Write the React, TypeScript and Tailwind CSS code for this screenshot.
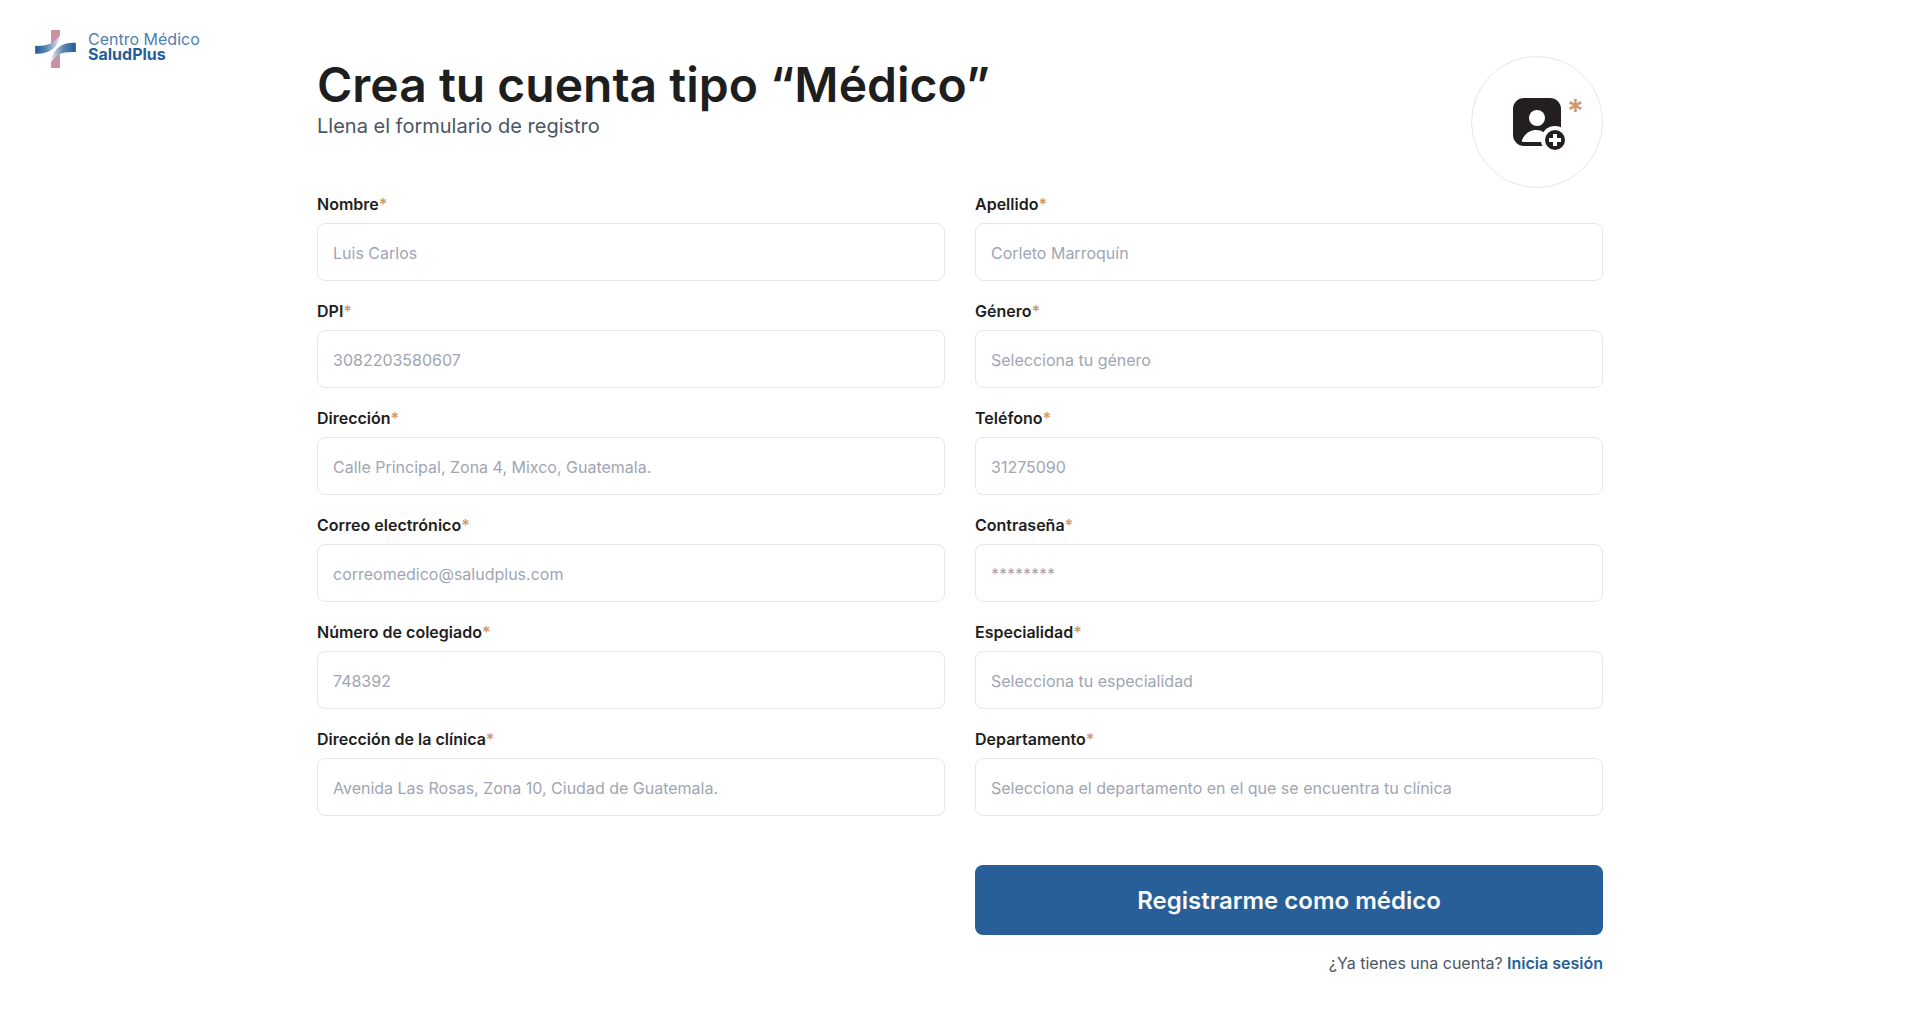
import { useId } from "react";

type FieldProps = {
  label: string;
  placeholder: string;
  type?: string;
  options?: string[];
};

const fields: FieldProps[] = [
  { label: "Nombre", placeholder: "Luis Carlos" },
  { label: "Apellido", placeholder: "Corleto Marroquín" },
  { label: "DPI", placeholder: "3082203580607" },
  { label: "Género", placeholder: "Selecciona tu género", options: ["Femenino", "Masculino"] },
  { label: "Dirección", placeholder: "Calle Principal, Zona 4, Mixco, Guatemala." },
  { label: "Teléfono", placeholder: "31275090", type: "tel" },
  { label: "Correo electrónico", placeholder: "correomedico@saludplus.com", type: "email" },
  { label: "Contraseña", placeholder: "********", type: "password" },
  { label: "Número de colegiado", placeholder: "748392" },
  {
    label: "Especialidad",
    placeholder: "Selecciona tu especialidad",
    options: ["Cardiología", "Dermatología", "Pediatría"],
  },
  { label: "Dirección de la clínica", placeholder: "Avenida Las Rosas, Zona 10, Ciudad de Guatemala." },
  {
    label: "Departamento",
    placeholder: "Selecciona el departamento en el que se encuentra tu clínica",
    options: ["Guatemala", "Quetzaltenango", "Sacatepéquez"],
  },
];

function Field({ label, placeholder, type = "text", options }: FieldProps) {
  const id = useId();
  return (
    <div className="flex flex-col gap-2">
      <label htmlFor={id} className="text-base leading-[21px] font-semibold">
        {label}
        <span className="text-[#cb9b6f]">*</span>
      </label>
      {options ? (
        <select
          id={id}
          defaultValue=""
          className="h-[58px] w-full appearance-none rounded-lg border border-gray-200 bg-white px-[15px] pt-[2px] text-base text-[#9fa5b4]"
        >
          <option value="" disabled>
            {placeholder}
          </option>
          {options.map((option) => (
            <option key={option}>{option}</option>
          ))}
        </select>
      ) : (
        <input
          id={id}
          type={type}
          placeholder={placeholder}
          className="h-[58px] w-full rounded-lg border border-gray-200 bg-white px-[15px] pt-[2px] text-base placeholder:text-[#9fa5b4]"
        />
      )}
    </div>
  );
}

function Logo() {
  return (
    <div className="flex items-start gap-3 pt-[30px] pl-[35px]">
      <svg width="41" height="38" viewBox="15 15 123 115" className="shrink-0" aria-hidden="true">
        <defs>
          <linearGradient id="swoosh-left" x1="0" x2="1">
            <stop offset="0" stopColor="#225b98" />
            <stop offset="0.45" stopColor="#5b85b3" />
            <stop offset="1" stopColor="#e3e9ef" />
          </linearGradient>
          <linearGradient id="swoosh-right" x1="0" x2="1">
            <stop offset="0" stopColor="#e3e9ef" />
            <stop offset="0.5" stopColor="#5b85b3" />
            <stop offset="1" stopColor="#225b98" />
          </linearGradient>
        </defs>
        <path d="M63 15H90V32C82 44 76 54 63 58Z" fill="#c891a4" />
        <path d="M90 130H63V112C70 102 77 92 90 86Z" fill="#c891a4" />
        <path d="M15 63C48 64 70 58 89 34C84 68 62 88 15 87Z" fill="url(#swoosh-left)" />
        <path d="M138 54C103 53 72 64 63 110C79 91 90 81 138 82Z" fill="url(#swoosh-right)" />
      </svg>
      <p className="flex flex-col pt-[2px] text-base leading-[15px] whitespace-nowrap">
        <span className="text-[#4f7fb0]">Centro Médico</span>
        <span className="font-bold text-[#285f98]">SaludPlus</span>
      </p>
    </div>
  );
}

function PhotoButton() {
  return (
    <button
      type="button"
      aria-label="Agregar foto de perfil"
      className="relative size-[132px] shrink-0 rounded-full border border-gray-200"
    >
      <svg width="48" height="48" viewBox="0 0 48 48" className="mx-auto overflow-visible" aria-hidden="true">
        <rect width="48" height="48" rx="11" fill="#231f20" />
        <circle cx="24" cy="20" r="8" fill="#fff" />
        <path d="M10.500 44C9 44 8.500 43 9.200 41.500C12 35.500 17 32 23 32C29 32 34 35 36 44Z" fill="#fff" />
        <circle cx="42" cy="42" r="14" fill="#fff" />
        <circle cx="42" cy="42" r="10" fill="#231f20" />
        <path d="M42 36V48M36 42H48" stroke="#fff" strokeWidth="4" />
      </svg>
      <span className="absolute top-[35px] right-[18px] text-[32px] leading-10 font-semibold text-[#cb9b6f]">*</span>
    </button>
  );
}

export default function App() {
  return (
    <div className="grid min-h-screen grid-cols-1 bg-white font-['Inter',sans-serif] text-[#1e1e1e] xl:grid-cols-[1fr_minmax(0,1286px)_1fr]">
      <header>
        <Logo />
      </header>
      <main className="px-6 pt-14 pb-10 xl:px-0">
        <div className="flex items-start justify-between">
          <div>
            <h1 className="text-5xl leading-[58px] font-semibold">Crea tu cuenta tipo “Médico”</h1>
            <p className="text-xl leading-6 text-gray-600">Llena el formulario de registro</p>
          </div>
          <PhotoButton />
        </div>
        <form className="mt-[6px] grid grid-cols-1 gap-x-[30px] gap-y-5 md:grid-cols-2">
          {fields.map((field) => (
            <Field key={field.label} {...field} />
          ))}
          <div className="mt-[29px] flex flex-col gap-[18px] md:col-start-2">
            <button
              type="submit"
              className="h-[70px] rounded-lg bg-[#285f98] pt-[2px] text-2xl font-semibold text-gray-50"
            >
              Registrarme como médico
            </button>
            <p className="text-right text-base leading-5 text-gray-600">
              ¿Ya tienes una cuenta?{" "}
              <a href="#inicia-sesion" className="font-semibold text-[#285f98]">
                Inicia sesión
              </a>
            </p>
          </div>
        </form>
      </main>
    </div>
  );
}
